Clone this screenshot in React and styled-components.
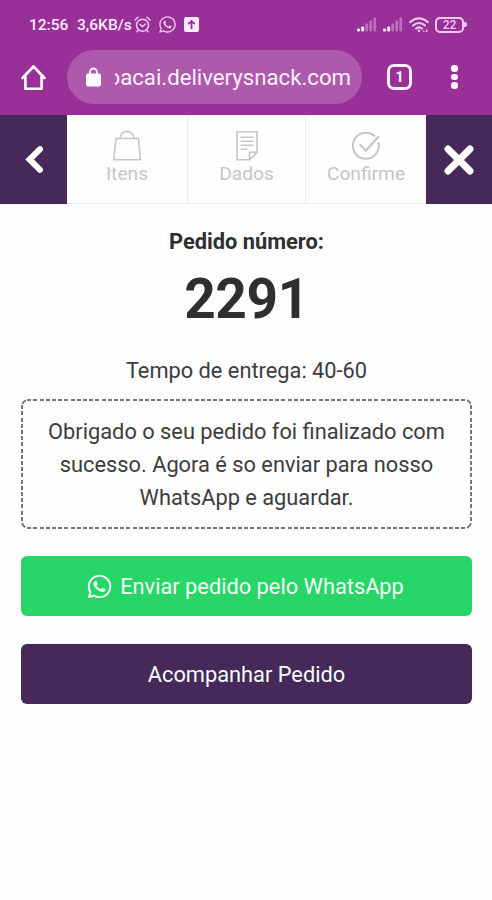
import styled, { createGlobalStyle } from "styled-components";
import { FaWhatsapp } from "react-icons/fa";

const GlobalStyle = createGlobalStyle`
  * {
    box-sizing: border-box;
  }

  body {
    margin: 0;
    background: #fff;
    font-family: Roboto, "Liberation Sans", sans-serif;
    color: #2f2f30;
  }

  svg {
    display: block;
    flex: none;
  }
`;

const Screen = styled.div`
  width: 492px;
  height: 900px;
  overflow: hidden;
  background: #fefefe;
`;

const BrowserHeader = styled.header`
  height: 115px;
  background: #993097;
  color: #fbeafb;
`;

const StatusBar = styled.div`
  display: flex;
  align-items: center;
  height: 50px;
  padding: 0 25px 1px 29px;
`;

const StatusText = styled.span`
  width: ${({ $width }) => $width}px;
  font-size: 15.5px;
  font-weight: 500;
  line-height: 20px;
  white-space: nowrap;
`;

const StatusIcons = styled.div`
  display: flex;
  align-items: center;
  gap: ${({ $gap }) => $gap}px;
  margin-left: ${({ $push }) => ($push ? "auto" : "0")};
  color: #f0c8f0;
`;

const AddressRow = styled.div`
  display: flex;
  align-items: center;
  height: 54px;
  padding: 0 30px 0 20px;
`;

const AddressBar = styled.div`
  display: flex;
  align-items: center;
  width: 295px;
  height: 54px;
  margin: 0 25px 0 20px;
  padding: 0 11px 0 19px;
  border-radius: 27px;
  background: #ad59ac;
`;

const Url = styled.div`
  display: flex;
  justify-content: flex-end;
  width: 236px;
  margin-left: auto;
  overflow: hidden;
  font-size: 22.2px;
  line-height: 30px;
  white-space: nowrap;
  color: #fdeffd;
`;

const TabCount = styled.div`
  display: flex;
  align-items: center;
  justify-content: center;
  width: 25px;
  height: 26px;
  margin-right: 39px;
  border: 2.5px solid #fdeffd;
  border-width: 3px;
  border-radius: 7px;
  font-size: 15px;
  font-weight: 700;
`;

const Dots = styled.div`
  display: flex;
  flex-direction: column;
  gap: 2px;

  i {
    width: 6.5px;
    height: 6.5px;
    border-radius: 50%;
    background: #fff;
  }
`;

const Steps = styled.nav`
  display: grid;
  grid-template-columns: 67px 121px 118px 120px 66px;
  height: 89px;
`;

const NavButton = styled.button`
  display: flex;
  align-items: center;
  justify-content: center;
  padding: 0;
  border: 0;
  background: #462859;
`;

const Step = styled.div`
  display: flex;
  flex-direction: column;
  align-items: center;
  padding-top: 14px;
  border-right: ${({ $last }) => ($last ? "0" : "1px solid #ececec")};
  border-bottom: 1px solid #ececec;
  color: #c6c6c6;
  font-size: 19.2px;
  line-height: 22px;
`;

const Content = styled.main`
  display: flex;
  flex-direction: column;
  padding: 24px 20px 0 21px;
  text-align: center;
`;

const OrderLabel = styled.h2`
  margin: 0;
  font-size: 21.8px;
  font-weight: 700;
  line-height: 27px;
`;

const OrderNumber = styled.div`
  margin-top: 8px;
  font-size: 55px;
  font-weight: 700;
  line-height: 72px;
  letter-spacing: -0.4px;
`;

const DeliveryTime = styled.p`
  margin: 22px 0 0;
  color: #3c3c3d;
  font-size: 21.8px;
  line-height: 28px;
`;

/* the outline is a solid rounded border, cut into short dashes by the mask */
const Message = styled.p`
  position: relative;
  height: 130px;
  margin: 14px 0 0;
  padding-top: 16px;
  color: #3c3c3d;
  font-size: 21.8px;
  line-height: 33px;

  &::before {
    content: "";
    position: absolute;
    inset: 0;
    border: 2px solid #777;
    border-radius: 7px;
    mask:
      repeating-linear-gradient(90deg, #000 0 4px, transparent 4px 6.2px) top / 100% 5px no-repeat,
      repeating-linear-gradient(90deg, #000 0 4px, transparent 4px 6.2px) bottom / 100% 5px no-repeat,
      repeating-linear-gradient(#000 0 4px, transparent 4px 6.2px) left / 5px 100% no-repeat,
      repeating-linear-gradient(#000 0 4px, transparent 4px 6.2px) right / 5px 100% no-repeat;
  }

  span {
    display: block;
  }
`;

const Button = styled.button`
  display: flex;
  align-items: center;
  justify-content: center;
  gap: 7px;
  height: 60px;
  margin-top: ${({ $top }) => $top}px;
  padding: 0 ${({ $shift }) => $shift || 0}px 0 0;
  border: 0;
  border-radius: 6px;
  background: ${({ $color }) => $color};
  color: #f4fff8;
  font-family: inherit;
  font-size: 21.8px;
`;

const AlarmIcon = () => (
  <svg width="17" height="17" viewBox="0 0 17 17" fill="none" stroke="currentColor" strokeWidth="1.5" strokeLinecap="round">
    <circle cx="8.5" cy="9.3" r="6" />
    <path d="M1 4 4 1.3M16 4 13 1.3M6 8.5l2.3 2 3-2.3M4.2 14.3 3 15.8M12.8 14.3l1.2 1.5" />
  </svg>
);

const UploadIcon = () => (
  <svg width="15" height="15" viewBox="0 0 15 15">
    <rect width="15" height="15" rx="2" fill="#fdeafd" />
    <path d="M7.5 12V4M4.2 7.2 7.5 3.9l3.3 3.3" fill="none" stroke="#993097" strokeWidth="1.8" />
  </svg>
);

const SignalIcon = () => (
  <svg width="20" height="15" viewBox="0 0 20 15" fill="#fdeafd">
    <rect x="0" y="11.5" width="3" height="3" rx="1" />
    <rect x="4.2" y="9.5" width="3" height="5" rx="1" />
    <g opacity="0.35">
      <rect x="8.4" y="6.5" width="2.7" height="8" rx="1" />
      <rect x="12.4" y="3.5" width="2.7" height="11" rx="1" />
      <rect x="16.4" y="0.5" width="2.7" height="14" rx="1" />
    </g>
  </svg>
);

const WifiIcon = () => (
  <svg width="20" height="16" viewBox="0 0 20 16" fill="none" stroke="currentColor" strokeWidth="2" strokeLinecap="round">
    <path d="M1 5.2Q10-2.8 19 5.2M4 8.6q6-5.2 12 0M7 11.6q3-2.5 6 0" />
    <circle cx="10" cy="13.8" r="1.3" fill="currentColor" stroke="none" />
    <path d="M14.8 14.2v.2M17.6 13.2v1.2" strokeWidth="1.6" />
  </svg>
);

const Battery = styled.div`
  display: flex;
  align-items: center;

  span {
    width: 29px;
    height: 16px;
    border: 2px solid #f0c8f0;
    border-radius: 5px;
    font-size: 12px;
    font-weight: 500;
    line-height: 12px;
    text-align: center;
  }

  i {
    width: 3px;
    height: 5px;
    border-radius: 0 2px 2px 0;
    background: #f0c8f0;
  }
`;

const HomeIcon = () => (
  <svg width="27" height="27" viewBox="0 0 27 27" fill="none" stroke="#fff" strokeWidth="2.6" strokeLinejoin="round" strokeLinecap="round">
    <path d="M2.5 14 13.5 2.5 24.5 14M5.4 12.2v12.6h16.2V12.2" />
  </svg>
);

const LockIcon = () => (
  <svg width="15" height="20" viewBox="0 0 15 20">
    <rect y="6.5" width="15" height="13" rx="2" fill="#fff" />
    <path d="M4 7V5a3.5 3.5 0 0 1 7 0v2" fill="none" stroke="#fff" strokeWidth="1.8" />
  </svg>
);

const ChevronIcon = () => (
  <svg width="20" height="29" viewBox="0 0 20 29" fill="none" stroke="#fff" strokeWidth="6">
    <path d="M16 4.2 5.6 14.5 16 24.8" strokeLinecap="round" />
  </svg>
);

const CloseIcon = () => (
  <svg width="32" height="32" viewBox="0 0 32 32" stroke="#fff" strokeWidth="7" strokeLinecap="round">
    <path d="M5 5l22 22M27 5 5 27" />
  </svg>
);

const BagIcon = () => (
  <svg width="30" height="34" viewBox="0 0 30 34" fill="none" stroke="currentColor" strokeWidth="1.6">
    <path d="M4 9.500h22.500l2 21.300H1.800zM8 9.500C9.500 0 20.500 0 22 9.500" strokeLinejoin="round" />
  </svg>
);

const NoteIcon = () => (
  <svg width="24" height="34" viewBox="0 0 24 34" fill="none" stroke="currentColor" strokeWidth="1.6">
    <path d="M2 2.800h20v20.500l-7.500 7.500H2zM14.500 30.800v-7.500H22M5.500 8.300h13M5.500 12.300h13M5.500 16.300h13M5.500 20.300h7" />
  </svg>
);

const CheckIcon = () => (
  <svg width="30" height="34" viewBox="0 0 30 34" fill="none" stroke="currentColor" strokeWidth="2">
    <path d="M24 7.500A13 13 0 1 0 27.300 13M8.500 15l6.500 6.500L28 7" />
  </svg>
);

const App = () => (
  <>
    <GlobalStyle />
    <Screen>
      <BrowserHeader>
        <StatusBar>
          <StatusText $width={48}>12:56</StatusText>
          <StatusText $width={57}>3,6KB/s</StatusText>
          <StatusIcons $gap={7}>
            <AlarmIcon />
            <FaWhatsapp size={19} />
            <UploadIcon />
          </StatusIcons>
          <StatusIcons $gap={6} $push>
            <SignalIcon />
            <SignalIcon />
            <WifiIcon />
            <Battery>
              <span>22</span>
              <i />
            </Battery>
          </StatusIcons>
        </StatusBar>
        <AddressRow>
          <HomeIcon />
          <AddressBar>
            <LockIcon />
            <Url>oacai.deliverysnack.com</Url>
          </AddressBar>
          <TabCount>1</TabCount>
          <Dots>
            <i />
            <i />
            <i />
          </Dots>
        </AddressRow>
      </BrowserHeader>
      <Steps>
        <NavButton aria-label="Voltar">
          <ChevronIcon />
        </NavButton>
        <Step>
          <BagIcon />
          Itens
        </Step>
        <Step>
          <NoteIcon />
          Dados
        </Step>
        <Step $last>
          <CheckIcon />
          Confirme
        </Step>
        <NavButton aria-label="Fechar">
          <CloseIcon />
        </NavButton>
      </Steps>
      <Content>
        <OrderLabel>Pedido número:</OrderLabel>
        <OrderNumber>2291</OrderNumber>
        <DeliveryTime>Tempo de entrega: 40-60</DeliveryTime>
        <Message>
          <span>Obrigado o seu pedido foi finalizado com</span>
          <span>sucesso. Agora é so enviar para nosso</span>
          <span>WhatsApp e aguardar.</span>
        </Message>
        <Button $color="#28d567" $top={27} $shift={3}>
          <FaWhatsapp size={27} />
          Enviar pedido pelo WhatsApp
        </Button>
        <Button $color="#462859" $top={28}>Acompanhar Pedido</Button>
      </Content>
    </Screen>
  </>
);

export default App;
